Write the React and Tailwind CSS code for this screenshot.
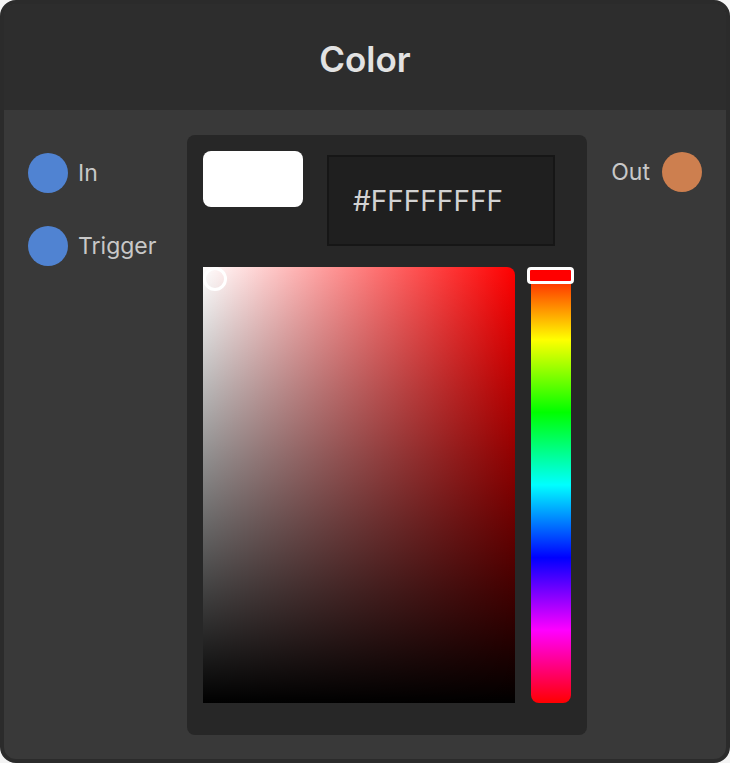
const inputs = [
  { id: "in", label: "In" },
  { id: "trigger", label: "Trigger" },
];

function Port({ color }) {
  return <span className={`h-10 w-10 shrink-0 rounded-full ${color}`} />;
}

function ColorPicker() {
  return (
    <div className="flex h-[600px] w-[400px] flex-col rounded-lg bg-[#272727] p-4">
      <div className="flex items-start">
        <div className="h-14 w-[100px] rounded-lg bg-white" />
        <div className="ml-6 mt-1 flex h-[91px] w-[228px] items-center border-2 border-[#161616] bg-[#1f1f1f] pl-6 text-[28px] text-[#d2d2d2]">
          #FFFFFFFF
        </div>
      </div>

      <div className="mt-[21px] flex gap-4">
        {/* saturation / value square */}
        <div className="relative h-[436px] w-[312px] rounded-tr-lg bg-[linear-gradient(to_right,#ffffff,#ff0000)]">
          <div className="absolute inset-0 rounded-tr-lg bg-[linear-gradient(to_bottom,rgba(0,0,0,0),#000000)]" />
          <div className="absolute left-0 top-0 h-6 w-6 rounded-full border-[3px] border-white" />
        </div>

        {/* hue strip */}
        <div className="relative h-[436px] w-10 rounded-b-lg bg-[linear-gradient(to_bottom,#ff0000,#ffff00,#00ff00,#00ffff,#0000ff,#ff00ff,#ff0000)]">
          <div className="absolute -left-1 top-0 h-[17px] w-[47px] rounded-[4px] border-[3px] border-white bg-[#ff0000]" />
        </div>
      </div>
    </div>
  );
}

export default function App() {
  return (
    <div className="bg-[#f4f4f4] font-['Inter',sans-serif]">
      <div className="flex h-[763px] w-[730px] flex-col overflow-hidden rounded-2xl border-4 border-[#2b2b2b] bg-[#393939]">
        <div className="flex h-[106px] items-center justify-center bg-[#2d2d2d] pt-1">
          <h1 className="text-[35px] font-semibold text-[#e2e2e2]">Color</h1>
        </div>

        <div className="flex px-6 pt-[25px]">
          <div className="flex w-[159px] flex-col gap-[33px] pt-[18px]">
            {inputs.map((p) => (
              <div key={p.id} className="flex items-center gap-[10px]">
                <Port color="bg-[#5083d2]" />
                <span className="text-[23px] text-[#c8c8c8]">{p.label}</span>
              </div>
            ))}
          </div>

          <ColorPicker />

          <div className="flex w-[115px] justify-end pt-[17px]">
            <div className="flex h-10 items-center gap-3">
              <span className="text-[23px] text-[#c8c8c8]">Out</span>
              <Port color="bg-[#cd7f4f]" />
            </div>
          </div>
        </div>
      </div>
    </div>
  );
}
